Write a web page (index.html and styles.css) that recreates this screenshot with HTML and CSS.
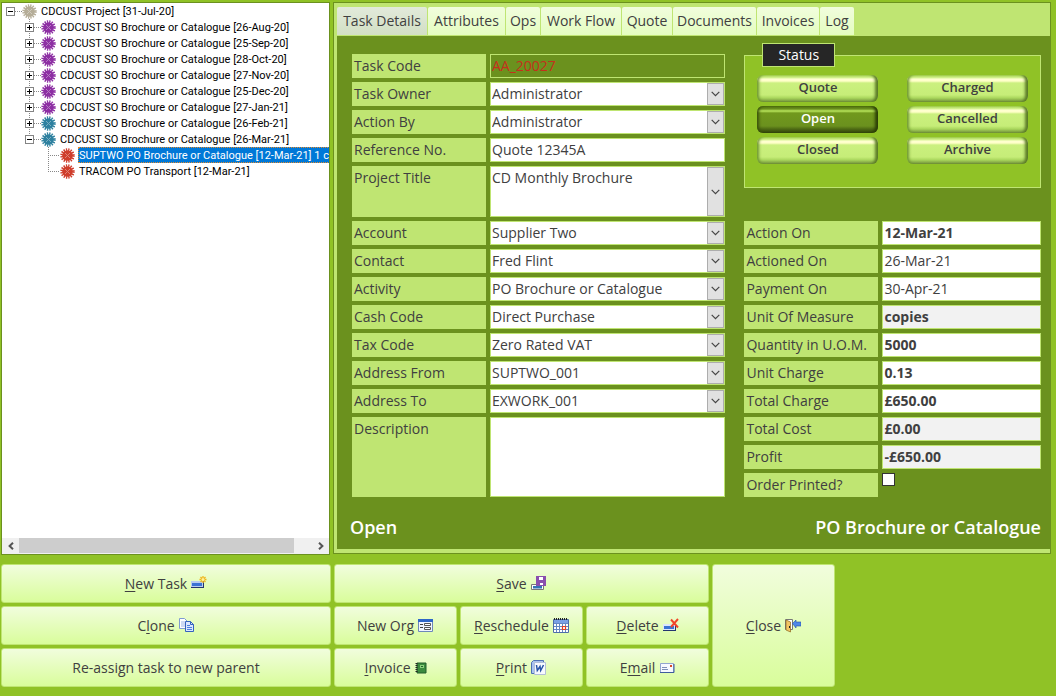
FILE: index.html
```html
<!DOCTYPE html>
<html lang="en">
<head>
<meta charset="utf-8">
<title>Task Explorer</title>
<link rel="stylesheet" href="styles.css">
</head>
<body>
<svg class="defs" aria-hidden="true">
  <symbol id="burst" viewBox="0 0 15 15">
    <circle cx="7.5" cy="7.5" r="5.9" fill="none" stroke="currentColor" stroke-width="2.6" stroke-dasharray="1.25 1.067"/>
    <circle cx="7.5" cy="7.5" r="5.3" fill="currentColor"/>
    <path d="M5 5l5 5M10 5l-5 5" stroke="#fff" stroke-width="1" opacity=".35"/>
  </symbol>
  <symbol id="chev" viewBox="0 0 9 6"><path d="M.7.8L4.5 4.6 8.3.8" fill="none" stroke="#444" stroke-width="1.2"/></symbol>
</svg>
<main class="page">
  <section class="tree-panel">
    <ul class="tree">
      <li><div class="row"><span class="box"></span><span class="dots"></span><svg class="burst grey"><use href="#burst"/></svg><span class="name">CDCUST Project [31-Jul-20]</span></div>
        <ul class="kids">
          <li><div class="row rail"><span class="box plus"></span><span class="dots"></span><svg class="burst purple"><use href="#burst"/></svg><span class="name">CDCUST SO Brochure or Catalogue [26-Aug-20]</span></div></li>
          <li><div class="row rail"><span class="box plus"></span><span class="dots"></span><svg class="burst purple"><use href="#burst"/></svg><span class="name">CDCUST SO Brochure or Catalogue [25-Sep-20]</span></div></li>
          <li><div class="row rail"><span class="box plus"></span><span class="dots"></span><svg class="burst purple"><use href="#burst"/></svg><span class="name">CDCUST SO Brochure or Catalogue [28-Oct-20]</span></div></li>
          <li><div class="row rail"><span class="box plus"></span><span class="dots"></span><svg class="burst purple"><use href="#burst"/></svg><span class="name">CDCUST SO Brochure or Catalogue [27-Nov-20]</span></div></li>
          <li><div class="row rail"><span class="box plus"></span><span class="dots"></span><svg class="burst purple"><use href="#burst"/></svg><span class="name">CDCUST SO Brochure or Catalogue [25-Dec-20]</span></div></li>
          <li><div class="row rail"><span class="box plus"></span><span class="dots"></span><svg class="burst purple"><use href="#burst"/></svg><span class="name">CDCUST SO Brochure or Catalogue [27-Jan-21]</span></div></li>
          <li><div class="row rail"><span class="box plus"></span><span class="dots"></span><svg class="burst blue"><use href="#burst"/></svg><span class="name">CDCUST SO Brochure or Catalogue [26-Feb-21]</span></div></li>
          <li><div class="row rail last"><span class="box"></span><span class="dots"></span><svg class="burst blue"><use href="#burst"/></svg><span class="name">CDCUST SO Brochure or Catalogue [26-Mar-21]</span></div>
            <ul class="kids">
              <li><div class="row rail"><span class="dots long"></span><svg class="burst red"><use href="#burst"/></svg><span class="name selected">SUPTWO PO Brochure or Catalogue [12-Mar-21] 1 c</span></div></li>
              <li><div class="row rail last"><span class="dots long"></span><svg class="burst red"><use href="#burst"/></svg><span class="name">TRACOM PO Transport [12-Mar-21]</span></div></li>
            </ul>
          </li>
        </ul>
      </li>
    </ul>
    <div class="scrollbar">
      <button type="button" aria-label="Scroll left"><svg viewBox="0 0 8 8"><path d="M6 .8L2.6 4 6 7.2" fill="none" stroke="#555" stroke-width="2"/></svg></button>
      <span class="track"><span class="thumb"></span></span>
      <button type="button" aria-label="Scroll right"><svg viewBox="0 0 8 8"><path d="M2 .8L5.4 4 2 7.2" fill="none" stroke="#555" stroke-width="2"/></svg></button>
    </div>
  </section>

  <section class="detail">
    <nav class="tabs">
      <button type="button" class="tab active">Task Details</button>
      <button type="button" class="tab">Attributes</button>
      <button type="button" class="tab">Ops</button>
      <button type="button" class="tab">Work Flow</button>
      <button type="button" class="tab">Quote</button>
      <button type="button" class="tab">Documents</button>
      <button type="button" class="tab">Invoices</button>
      <button type="button" class="tab">Log</button>
    </nav>
    <form class="form">
      <div class="fields">
        <label for="code">Task Code</label><input id="code" class="code" value="AA_20027" readonly>
        <label for="owner">Task Owner</label><span class="combo"><select id="owner"><option>Administrator</option></select><span class="drop"><svg><use href="#chev"/></svg></span></span>
        <label for="by">Action By</label><span class="combo"><select id="by"><option>Administrator</option></select><span class="drop"><svg><use href="#chev"/></svg></span></span>
        <label for="ref">Reference No.</label><input id="ref" value="Quote 12345A">
        <label for="title" class="mid">Project Title</label><span class="combo mid"><select id="title"><option>CD Monthly Brochure</option></select><span class="drop"><svg><use href="#chev"/></svg></span></span>
        <label for="account">Account</label><span class="combo"><select id="account"><option>Supplier Two</option></select><span class="drop"><svg><use href="#chev"/></svg></span></span>
        <label for="contact">Contact</label><span class="combo"><select id="contact"><option>Fred Flint</option></select><span class="drop"><svg><use href="#chev"/></svg></span></span>
        <label for="activity">Activity</label><span class="combo"><select id="activity"><option>PO Brochure or Catalogue</option></select><span class="drop"><svg><use href="#chev"/></svg></span></span>
        <label for="cash">Cash Code</label><span class="combo"><select id="cash"><option>Direct Purchase</option></select><span class="drop"><svg><use href="#chev"/></svg></span></span>
        <label for="tax">Tax Code</label><span class="combo"><select id="tax"><option>Zero Rated VAT</option></select><span class="drop"><svg><use href="#chev"/></svg></span></span>
        <label for="from">Address From</label><span class="combo"><select id="from"><option>SUPTWO_001</option></select><span class="drop"><svg><use href="#chev"/></svg></span></span>
        <label for="to">Address To</label><span class="combo"><select id="to"><option>EXWORK_001</option></select><span class="drop"><svg><use href="#chev"/></svg></span></span>
        <label for="desc" class="tall">Description</label><textarea id="desc" class="tall"></textarea>
      </div>
      <div class="side">
        <fieldset class="status">
          <legend>Status</legend>
          <div class="states">
            <button type="button">Quote</button><button type="button">Charged</button>
            <button type="button" class="on">Open</button><button type="button">Cancelled</button>
            <button type="button">Closed</button><button type="button">Archive</button>
          </div>
        </fieldset>
        <div class="fields">
          <label for="aon">Action On</label><input id="aon" class="strong" value="12-Mar-21">
          <label for="adon">Actioned On</label><input id="adon" value="26-Mar-21">
          <label for="pay">Payment On</label><input id="pay" value="30-Apr-21">
          <label for="uom">Unit Of Measure</label><input id="uom" class="strong locked" value="copies" readonly>
          <label for="qty">Quantity in U.O.M.</label><input id="qty" class="strong" value="5000">
          <label for="unit">Unit Charge</label><input id="unit" class="strong" value="0.13">
          <label for="total">Total Charge</label><input id="total" class="strong" value="£650.00">
          <label for="cost">Total Cost</label><input id="cost" class="strong locked" value="£0.00" readonly>
          <label for="profit">Profit</label><input id="profit" class="strong locked" value="-£650.00" readonly>
          <label for="printed">Order Printed?</label><input id="printed" type="checkbox">
        </div>
      </div>
    </form>
    <footer class="summary"><span>Open</span><span>PO Brochure or Catalogue</span></footer>
  </section>
</main>

<section class="actions">
  <button type="button" class="first"><span><u>N</u>ew Task</span>
    <svg class="icon" viewBox="0 0 16 16"><rect x="0" y="5" width="13" height="7" fill="#24366f"/><rect x="0" y="5" width="12" height="6" fill="#b9cdf0"/><rect x="1" y="7" width="10" height="3" fill="#3b73d3"/><path d="M12 0v7M8.500 3.500h7M9.500 1l5 5M14.500 1l-5 5" stroke="#efb51c" stroke-width="1.300"/><circle cx="12" cy="3.500" r="1.500" fill="#fff39a"/></svg></button>
  <button type="button" class="save"><span><u>S</u>ave</span>
    <svg class="icon" viewBox="0 0 16 16"><path d="M.5 8.500h12v5H.5z" fill="#fff" stroke="#777"/><path d="M2 10h9v2.500H2z" fill="#3474b5"/><path d="M5 0h10v10H5z" fill="#8a4fae"/><path d="M8 1h4v3H8zM9 7h3v2H9z" fill="#fff"/></svg></button>
  <button type="button" class="close"><span><u>C</u>lose</span>
    <svg class="icon" viewBox="0 0 16 16"><path d="M.5 1.500h7v10h-7z" fill="#fff" stroke="#777"/><path d="M1 2l4.500 2v10L1 12z" fill="#f2c565" stroke="#8b641c" stroke-width=".7"/><path d="M4.500 8v2" stroke="#222"/><path d="M7.500 5.500L11 2v2h5v4h-5v2z" fill="#4f86e8" stroke="#244fa8" stroke-width=".6"/></svg></button>
  <button type="button" class="first"><span>C<u>l</u>one</span>
    <svg class="icon" viewBox="0 0 16 16"><path d="M.5.500h5l3 3v7h-8z" fill="#fff" stroke="#7e9ad1"/><path d="M2 4h4M2 6h4M2 8h4" stroke="#9db5e5"/><path d="M6.500 3.500h5l3 3v7h-8z" fill="#dbe7ff" stroke="#3563bd"/><path d="M11.500 3.500v3h3" fill="none" stroke="#3563bd"/><path d="M8 7.500h3M8 9.500h5M8 11.500h5" stroke="#4d80dc"/></svg></button>
  <button type="button"><span>New Org</span>
    <svg class="icon" viewBox="0 0 16 16"><path d="M.5 1.500h14v12H.5z" fill="#f1f5ff" stroke="#6d88ba"/><path d="M0 1h15v3H0z" fill="#2e66c8"/><path d="M2 6.500h3M2 9.500h3" stroke="#444"/><path d="M6.500 5.500h6v2h-6zM6.500 9.500h6v2h-6z" fill="#fff" stroke="#555"/></svg></button>
  <button type="button"><span><u>R</u>eschedule</span>
    <svg class="icon" viewBox="0 0 16 16"><path d="M.5 1.500h15v13H.5z" fill="#fff" stroke="#4e6da9"/><path d="M1 2h14v3H1z" fill="#7aa0e5"/><path d="M1 1h14" stroke="#222" stroke-width="2" stroke-dasharray="1 1"/><path d="M3.500 5v9M6.500 5v9M9.500 5v9M12.500 5v9M1 5.500h14M1 8.500h14M1 11.500h14" stroke="#6688c4"/><path d="M9.500 8.500h3v3h-3z" fill="#fff" stroke="#e34122" stroke-width="1.200"/></svg></button>
  <button type="button"><span><u>D</u>elete</span>
    <svg class="icon" viewBox="0 0 16 16"><path d="M0 6h13v7H0z" fill="#24366f"/><path d="M0 6h12v6H0z" fill="#dce7fa"/><path d="M1 8h10v3H1z" fill="#3b73d3"/><path d="M8 1.500l7 8M15 1l-7 8" stroke="#f0452a" stroke-width="1.900"/></svg></button>
  <button type="button" class="first">Re-assign task to new parent</button>
  <button type="button"><span><u>I</u>nvoice</span>
    <svg class="icon narrow" viewBox="0 0 12 16"><path d="M2 3h9v10H2z" fill="#3b8b3e" stroke="#235d2a"/><path d="M1.500 3v10" stroke="#222" stroke-width="2" stroke-dasharray="1 1"/><path d="M5 5h4v3H5z" fill="#8bd17d"/><path d="M6 6.500h2" stroke="#245e2b"/></svg></button>
  <button type="button"><span><u>P</u>rint</span>
    <svg class="icon" viewBox="0 0 16 16"><path d="M.5 2.500l2-2h10v13h-12z" fill="#a9c3ef" stroke="#4d70b2"/><path d="M3.500 2.500h11v12h-11z" fill="#f7faff" stroke="#b3c0d8"/><path d="M5.500 5l.8 5.500L9 6.500l.7 4L12.500 5" fill="none" stroke="#2855a8" stroke-width="1.500"/></svg></button>
  <button type="button"><span>E<u>m</u>ail</span>
    <svg class="icon" viewBox="0 0 16 16"><path d="M1.500 3.500h13v9h-13z" fill="#f6f8ff" stroke="#92a5cf"/><path d="M1 12.500h14V4" fill="none" stroke="#3f5c9d"/><path d="M3 7.500h5M3 9.500h6" stroke="#7d8fb7"/><path d="M11 5h2v2h-2z" fill="#d84b28"/></svg></button>
</section>
</body>
</html>
```
FILE: styles.css
```css
* { box-sizing: border-box; }
body {
  margin: 0;
  padding: 2px 5px 8px 1px;
  background: #90c226;
  color: #404040;
  font: 14px/24px "Trebuchet MS", "Open Sans", sans-serif;
}
button, input, select, textarea { font: inherit; color: inherit; margin: 0; border-radius: 0; }
.defs { position: absolute; width: 0; height: 0; }

.page { display: grid; grid-template-columns: 329px 1fr; gap: 3px; }

.tree-panel { display: flex; flex-direction: column; min-width: 0; overflow: hidden; background: #fff; border: 1px solid #6b911e; }
.tree, .kids { list-style: none; margin: 0; padding: 0; }
.tree { flex: 1; padding: 0 0 0 4px; color: #000; font: 11px/18px Tahoma, Roboto, sans-serif; }
.kids { padding-left: 19px; }
.row { display: flex; align-items: center; height: 16px; white-space: nowrap; }
.rail { background: repeating-linear-gradient(#888 0 1px, transparent 1px 2px) 4px 0 / 1px 100% no-repeat; }
.rail.last { background-size: 1px 8px; }
.box { flex: none; width: 9px; height: 9px; border: 1px solid #848484; background: linear-gradient(#000, #000) center / 5px 1px no-repeat, #fff; }
.box.plus { background: linear-gradient(#000, #000) center / 5px 1px no-repeat, linear-gradient(#000, #000) center / 1px 5px no-repeat, #fff; }
.dots { flex: none; width: 7px; height: 1px; background: repeating-linear-gradient(90deg, #888 0 1px, transparent 1px 2px); }
.dots.long { width: 12px; margin-left: 4px; }
.burst { flex: none; width: 15px; height: 15px; }
.grey { color: #b5ad98; }
.purple { color: #8d2fa3; }
.blue { color: #2d809f; }
.red { color: #cf3d2b; }
.name { height: 16px; margin-left: 3px; padding: 0 1px; }
.name.selected { flex: 1; color: #fff; background: #0078d7; outline: 1px dotted #e58a2c; outline-offset: -1px; }

.scrollbar { display: flex; height: 16px; background: #f0f0f0; }
.scrollbar button { width: 17px; padding: 0; border: 0; background: none; line-height: 0; }
.scrollbar svg { width: 8px; height: 8px; }
.track { flex: 1; }
.thumb { display: block; width: 94%; height: 15px; background: #cdcdcd; }

.detail { min-width: 0; background: #6b911e; border: 1px solid #6b911e; box-shadow: inset 3px 0 #bfe572, inset 0 -4px #bfe572; margin-bottom: 1px; }
.tabs { display: grid; grid-template-columns: 90px 77px 34px 80px 50px 83px 62px 34px; gap: 1px; padding: 4px 0 1px 3px; background: #bfe572; }
.tab { height: 28px; padding: 0; border: 0; border-radius: 2px 2px 0 0; background: linear-gradient(#f1fddd, #e4fdc0); white-space: nowrap; }
.tab.active { background: linear-gradient(#e2eadb, #d2dfc4); }

.form { display: grid; grid-template-columns: 374fr 297fr; gap: 19px; padding: 7px 9px 0 18px; }
.form > .fields { padding-top: 11px; }
.fields { display: grid; grid-template-columns: 134px 1fr; gap: 4px; align-content: start; }
.fields label { height: 24px; padding-left: 2px; background: #bfe572; white-space: nowrap; }
.fields input, .fields textarea, .combo { width: 100%; min-width: 0; height: 24px; padding: 0 1px; border: 1px solid #bfe572; background: #fff; }
.fields textarea { display: block; resize: none; }
.fields .mid { height: 51px; }
.fields .tall { height: 80px; }
.fields .code { background: #6b911e; color: #c5301c; }
.fields .strong { font-weight: 700; }
.fields .locked { background: #f2f2f2; }
.fields [type="checkbox"] { appearance: none; width: 13px; height: 13px; border-color: #333; }
.combo { position: relative; }
.combo select { display: block; width: 100%; height: 22px; padding: 0 18px 0 0; border: 0; appearance: none; background: none; line-height: 22px; }
.drop { position: absolute; top: 0; right: 0; bottom: 0; width: 17px; display: flex; align-items: center; justify-content: center; border: 1px solid #adadad; background: #e1e1e1; pointer-events: none; }
.drop svg { width: 9px; height: 6px; }

.side { display: flex; flex-direction: column; gap: 33px; min-width: 0; }
.status { min-width: 0; margin: 0; padding: 8px 12px 23px; border: 1px solid #bfe572; background: #90c226; }
.status legend { height: 24px; margin-left: 5px; padding: 0 15px; border: 1px solid #bfe572; background: #262626; color: #fff; line-height: 22px; }
.states { display: grid; grid-template-columns: 121px 121px; justify-content: space-between; gap: 4px; }
.states button {
  height: 27px;
  padding: 0 0 3px;
  border: 0;
  border-radius: 6px;
  background: linear-gradient(#9fcf4a, #d9f596 3px, #ffffd2 4px, #ffffc8 6px, #cbf07f 8px, #c6ed78 20px, #a9d65c 23px, #6e8d38);
  box-shadow: inset 4px 0 3px -2px #6f9730, inset -5px 0 3px -2px #5b7a26;
  font-size: 13px;
  font-weight: 600;
  line-height: 20px;
}
.states .on {
  color: #fff;
  background: linear-gradient(#4c6b0d, #6b911e 3px, #b9e55c 5px, #71981d 7px, #6b911e 20px, #4e6b14 23px, #2f4209);
  box-shadow: inset 4px 0 3px -2px #3a520a, inset -5px 0 3px -2px #2c3f06;
}

.summary { display: flex; justify-content: space-between; padding: 18px 9px 13px 16px; color: #fff; font-size: 18px; font-weight: 600; line-height: 25px; }

.actions { display: grid; grid-template-columns: 330px repeat(4, 123px); grid-auto-rows: 39px; gap: 3px; margin-top: 9px; }
.actions button { display: flex; align-items: center; justify-content: center; gap: 4px; padding: 0; border: 1px solid #bfe572; border-radius: 3px; background: linear-gradient(#f1fddd, #d9fd9b); }
.actions .save { grid-column: 2 / span 3; }
.actions .close { grid-column: 5; grid-row: 1 / span 3; }
.actions .first { grid-column: 1; }
.actions u { text-underline-offset: 2px; }
.icon { flex: none; width: 16px; height: 16px; }
.icon.narrow { width: 12px; }
```
